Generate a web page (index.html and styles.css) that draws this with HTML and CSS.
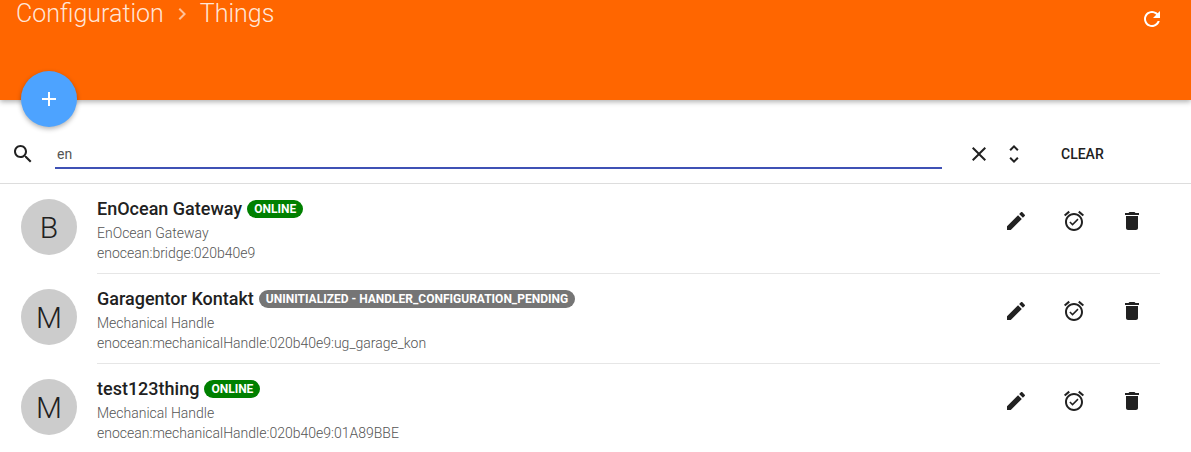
FILE: index.html
```html
<!DOCTYPE html>
<html lang="en">

<head>
    <meta charset="UTF-8">
    <title>Things</title>
    <link rel="stylesheet" href="styles.css">
</head>

<body>
    <header class="toolbar">
        <h1 class="crumbs">
            <span>Configuration</span>
            <svg class="crumbSep" viewBox="0 0 24 24"><path d="M10 6L8.59 7.41 13.17 12l-4.58 4.59L10 18l6-6z"/></svg>
            <span>Things</span>
        </h1>
        <svg class="icon refresh" viewBox="0 0 24 24"><path d="M17.65 6.35C16.2 4.9 14.21 4 12 4c-4.42 0-7.99 3.58-7.99 8s3.57 8 7.99 8c3.73 0 6.84-2.55 7.73-6h-2.08c-.82 2.33-3.04 4-5.65 4-3.31 0-6-2.69-6-6s2.69-6 6-6c1.66 0 3.14.69 4.22 1.78L13 11h7V4l-2.35 2.35z"/></svg>
        <button class="fab">
            <svg class="icon" viewBox="0 0 24 24"><path d="M19 13h-6v6h-2v-6H5v-2h6V5h2v6h6v2z"/></svg>
        </button>
    </header>

    <div class="filterBar">
        <svg class="icon searchIcon" viewBox="0 0 24 24"><path d="M15.5 14h-.79l-.28-.27C15.41 12.59 16 11.11 16 9.5 16 5.91 13.09 3 9.5 3S3 5.91 3 9.5 5.91 16 9.5 16c1.61 0 3.09-.59 4.23-1.57l.27.28v.79l5 4.99L20.49 19l-4.99-5zm-6 0C7.01 14 5 11.99 5 9.5S7.01 5 9.5 5 14 7.01 14 9.5 11.99 14 9.5 14z"/></svg>
        <div class="filterInput">en</div>
        <svg class="icon closeIcon" viewBox="0 0 24 24"><path d="M19 6.41L17.59 5 12 10.59 6.41 5 5 6.41 10.59 12 5 17.59 6.41 19 12 13.41 17.59 19 19 17.59 13.41 12z"/></svg>
        <svg class="icon unfoldIcon" viewBox="0 0 24 24"><path d="M12 5.83L15.17 9l1.41-1.41L12 3 7.41 7.59 8.83 9 12 5.83zm0 12.34L8.83 15l-1.41 1.41L12 21l4.59-4.59L15.17 15 12 18.17z"/></svg>
        <span class="clearBtn">CLEAR</span>
    </div>

    <div class="list">
        <div class="row">
            <div class="avatar">B</div>
            <div class="rowBody">
                <div class="rowText">
                    <div class="title">EnOcean Gateway <span class="badge online">ONLINE</span></div>
                    <div class="sub">EnOcean Gateway</div>
                    <div class="sub">enocean:bridge:020b40e9</div>
                </div>
                <div class="actions">
                    <svg class="icon" viewBox="0 0 24 24"><path d="M3 17.25V21h3.75L17.81 9.94l-3.75-3.75L3 17.25zM20.71 7.04c.39-.39.39-1.02 0-1.41l-2.34-2.34c-.39-.39-1.02-.39-1.41 0l-1.83 1.83 3.75 3.75 1.83-1.83z"/></svg>
                    <svg class="icon" viewBox="0 0 24 24"><path d="M22 5.72l-4.6-3.86-1.29 1.53 4.6 3.86L22 5.72zM7.88 3.39L6.6 1.86 2 5.71l1.29 1.53 4.59-3.85zM12 4c-4.97 0-9 4.03-9 9s4.03 9 9 9 9-4.03 9-9-4.03-9-9-9zm0 16c-3.86 0-7-3.14-7-7s3.14-7 7-7 7 3.14 7 7-3.14 7-7 7zm-1.46-5.47L8.41 12.4l-1.06 1.06 3.18 3.18 6-6-1.06-1.06-4.93 4.95z"/></svg>
                    <svg class="icon" viewBox="0 0 24 24"><path d="M6 19c0 1.1.9 2 2 2h8c1.1 0 2-.9 2-2V7H6v12zM19 4h-3.5l-1-1h-5l-1 1H5v2h14V4z"/></svg>
                </div>
            </div>
        </div>
        <div class="row">
            <div class="avatar">M</div>
            <div class="rowBody">
                <div class="rowText">
                    <div class="title">Garagentor Kontakt <span class="badge pending">UNINITIALIZED - HANDLER_CONFIGURATION_PENDING</span></div>
                    <div class="sub">Mechanical Handle</div>
                    <div class="sub">enocean:mechanicalHandle:020b40e9:ug_garage_kon</div>
                </div>
                <div class="actions">
                    <svg class="icon" viewBox="0 0 24 24"><path d="M3 17.25V21h3.75L17.81 9.94l-3.75-3.75L3 17.25zM20.71 7.04c.39-.39.39-1.02 0-1.41l-2.34-2.34c-.39-.39-1.02-.39-1.41 0l-1.83 1.83 3.75 3.75 1.83-1.83z"/></svg>
                    <svg class="icon" viewBox="0 0 24 24"><path d="M22 5.72l-4.6-3.86-1.29 1.53 4.6 3.86L22 5.72zM7.88 3.39L6.6 1.86 2 5.71l1.29 1.53 4.59-3.85zM12 4c-4.97 0-9 4.03-9 9s4.03 9 9 9 9-4.03 9-9-4.03-9-9-9zm0 16c-3.86 0-7-3.14-7-7s3.14-7 7-7 7 3.14 7 7-3.14 7-7 7zm-1.46-5.47L8.41 12.4l-1.06 1.06 3.18 3.18 6-6-1.06-1.06-4.93 4.95z"/></svg>
                    <svg class="icon" viewBox="0 0 24 24"><path d="M6 19c0 1.1.9 2 2 2h8c1.1 0 2-.9 2-2V7H6v12zM19 4h-3.5l-1-1h-5l-1 1H5v2h14V4z"/></svg>
                </div>
            </div>
        </div>
        <div class="row">
            <div class="avatar">M</div>
            <div class="rowBody">
                <div class="rowText">
                    <div class="title">test123thing <span class="badge online">ONLINE</span></div>
                    <div class="sub">Mechanical Handle</div>
                    <div class="sub">enocean:mechanicalHandle:020b40e9:01A89BBE</div>
                </div>
                <div class="actions">
                    <svg class="icon" viewBox="0 0 24 24"><path d="M3 17.25V21h3.75L17.81 9.94l-3.75-3.75L3 17.25zM20.71 7.04c.39-.39.39-1.02 0-1.41l-2.34-2.34c-.39-.39-1.02-.39-1.41 0l-1.83 1.83 3.75 3.75 1.83-1.83z"/></svg>
                    <svg class="icon" viewBox="0 0 24 24"><path d="M22 5.72l-4.6-3.86-1.29 1.53 4.6 3.86L22 5.72zM7.88 3.39L6.6 1.86 2 5.71l1.29 1.53 4.59-3.85zM12 4c-4.97 0-9 4.03-9 9s4.03 9 9 9 9-4.03 9-9-4.03-9-9-9zm0 16c-3.86 0-7-3.14-7-7s3.14-7 7-7 7 3.14 7 7-3.14 7-7 7zm-1.46-5.47L8.41 12.4l-1.06 1.06 3.18 3.18 6-6-1.06-1.06-4.93 4.95z"/></svg>
                    <svg class="icon" viewBox="0 0 24 24"><path d="M6 19c0 1.1.9 2 2 2h8c1.1 0 2-.9 2-2V7H6v12zM19 4h-3.5l-1-1h-5l-1 1H5v2h14V4z"/></svg>
                </div>
            </div>
        </div>
    </div>
</body>

</html>
```

FILE: styles.css
```css
:root {
    --primary: #ff6600;
    --text: #212121;
    --secondary: #555555;
    --divider: #e6e6e6;
}

html,
body {
    height: 452px;
    overflow: hidden;
}

body {
    margin: 0;
    background-color: #ffffff;
    color: var(--text);
    font-family: Roboto, sans-serif;
}

.icon {
    display: block;
    width: 24px;
    height: 24px;
    flex: none;
    fill: var(--text);
}

.toolbar {
    position: relative;
    display: flex;
    align-items: flex-start;
    justify-content: space-between;
    height: 100px;
    padding: 0 27px 0 16px;
    box-sizing: border-box;
    background-color: var(--primary);
    box-shadow: 0 2px 5px rgba(0, 0, 0, 0.3);
}

.crumbs {
    display: flex;
    align-items: center;
    gap: 6px;
    margin: 0;
    color: rgba(255, 255, 255, 0.85);
    font-size: 25px;
    font-weight: 300;
    line-height: 28px;
}

.crumbSep {
    width: 24px;
    height: 24px;
    fill: rgba(255, 255, 255, 0.6);
}

.refresh {
    margin-top: 7px;
    fill: #ffffff;
}

.fab {
    position: absolute;
    left: 21px;
    top: 71px;
    display: flex;
    align-items: center;
    justify-content: center;
    width: 56px;
    height: 56px;
    padding: 0;
    border: none;
    border-radius: 50%;
    background-color: #4da3ff;
    box-shadow: 0 2px 5px rgba(0, 0, 0, 0.3);
}

.fab .icon {
    fill: #ffffff;
}

.filterBar {
    display: flex;
    align-items: center;
    box-sizing: border-box;
    height: 84px;
    padding: 24px 0 0 11px;
    border-bottom: 1px solid #dddddd;
}

.searchIcon {
    margin-right: 20px;
}

.filterInput {
    flex: 1;
    height: 27px;
    margin-top: 1px;
    padding-left: 2px;
    border-bottom: 2px solid #3f51b5;
    color: #555555;
    font-size: 14px;
    line-height: 29px;
}

.closeIcon {
    margin-left: 25px;
}

.unfoldIcon {
    margin-left: 11px;
}

.clearBtn {
    width: 44px;
    margin: 0 86px 0 35px;
    font-size: 14px;
    font-weight: 500;
    white-space: nowrap;
}

.row {
    display: flex;
    height: 90px;
    padding-left: 21px;
}

.avatar {
    display: flex;
    align-items: center;
    justify-content: center;
    flex: none;
    width: 56px;
    height: 56px;
    margin-top: 15px;
    border-radius: 50%;
    background-color: #cccccc;
    font-size: 30px;
    font-weight: 300;
}

.rowBody {
    display: flex;
    justify-content: space-between;
    flex: 1;
    margin: 0 31px 0 20px;
    border-bottom: 1px solid var(--divider);
}

.row:last-child .rowBody {
    border-bottom: none;
}

.rowText {
    padding-top: 14px;
}

.title {
    display: flex;
    align-items: center;
    gap: 5px;
    height: 22px;
    margin-bottom: 3px;
    font-size: 18px;
    font-weight: 500;
    line-height: 20px;
    white-space: nowrap;
}

.sub {
    color: var(--secondary);
    font-size: 14px;
    font-weight: 300;
    line-height: 20px;
}

.badge {
    padding: 0 7px;
    border-radius: 9px;
    color: #ffffff;
    font-size: 12px;
    font-weight: 700;
    line-height: 18px;
}

.online {
    background-color: #008000;
}

.pending {
    background-color: #757575;
}

.actions {
    display: flex;
    gap: 34px;
    margin-right: 16px;
    padding-top: 25px;
}
```
